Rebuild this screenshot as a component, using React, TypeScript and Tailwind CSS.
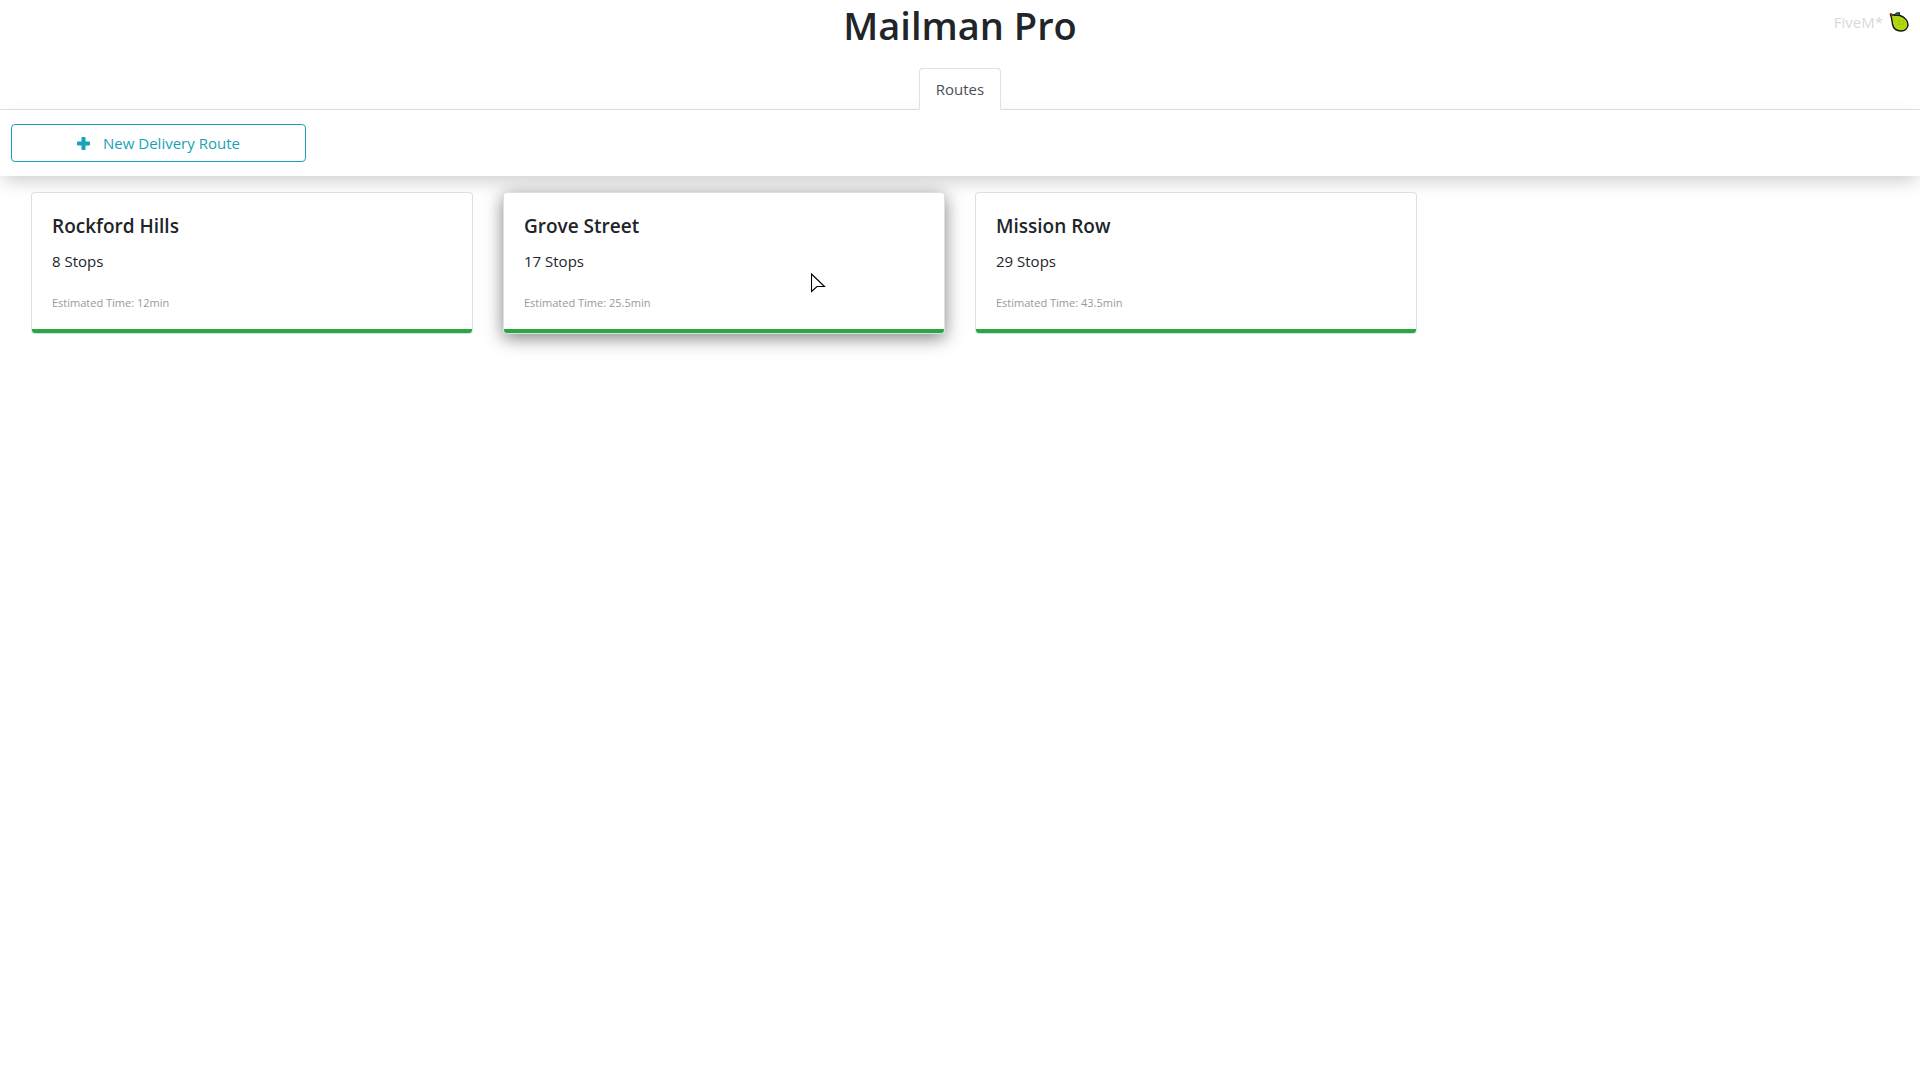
import { ReactNode } from "react";

type Route = {
  name: string;
  stops: number;
  time: string;
  active?: boolean;
};

const routes: Route[] = [
  { name: "Rockford Hills", stops: 8, time: "12min" },
  { name: "Grove Street", stops: 17, time: "25.5min", active: true },
  { name: "Mission Row", stops: 29, time: "43.5min" },
];

function PearLogo() {
  return (
    <svg width="20" height="22" viewBox="0 0 20 22" aria-hidden="true">
      <path
        d="M1.5 3.5 L11 4.5 C15 6 19 9.5 19 13.5 C19 17.5 16 20 12 20 C7.5 20 4.5 17.5 3.5 13.5 C3 10 3 7.5 1.5 3.5 Z"
        fill="#b0d60f"
        stroke="#111"
        strokeWidth="1.4"
        strokeLinejoin="round"
      />
      <path d="M5 4.5 L7 2 L10.5 1.5 L10.5 4.5 Z" fill="#0b7a3b" stroke="#111" strokeWidth="0.8" />
      <path d="M1 2.5 L4 4.5" stroke="#7a3b1d" strokeWidth="2" />
      <path d="M9 10 h2 M13 10 h2 M9 13 h2 M13 13 h2" stroke="#8fbc0a" />
    </svg>
  );
}

function PlusIcon() {
  return (
    <svg width="13" height="13" viewBox="0 0 13 13" fill="currentColor" aria-hidden="true">
      <rect x="4.5" y="0" width="4" height="13" rx="1" />
      <rect x="0" y="4.5" width="13" height="4" rx="1" />
    </svg>
  );
}

function Pointer() {
  return (
    <svg
      className="pointer-events-none absolute top-[80px] right-[118px]"
      width="15"
      height="20"
      viewBox="0 0 15 20"
      aria-hidden="true"
    >
      <path d="M0.5 1 L13.5 13.5 H6 L0.5 18.5 Z" fill="#fff" stroke="#000" strokeWidth="1.1" />
    </svg>
  );
}

function Card({ active, children }: { active?: boolean; children: ReactNode }) {
  return (
    <article
      className={
        active
          ? "relative rounded border border-black/[0.125] bg-white shadow-[0_4px_18px_0_rgba(0,0,0,0.5)]"
          : "relative rounded border border-black/[0.125] bg-white"
      }
    >
      {children}
    </article>
  );
}

export default function App() {
  return (
    <div className="min-h-screen bg-white font-['Open_Sans',sans-serif] text-[15px] leading-6 text-[#212529]">
      <header className="relative">
        <h1 className="text-center text-[38px] leading-[50px] font-semibold">Mailman Pro</h1>
        <div className="absolute top-[10px] right-[11px] flex items-center gap-[6px] text-[#d9d9d9]">
          <span>FiveM*</span>
          <PearLogo />
        </div>
      </header>

      <nav className="mt-[18px] flex justify-center border-b border-[#dee2e6]">
        <a
          href="#routes"
          className="-mb-px rounded-t border border-[#dee2e6] border-b-white bg-white px-4 py-2 text-[#495057]"
        >
          Routes
        </a>
      </nav>

      <main id="routes">
        <div className="bg-white px-[11px] py-[14px] shadow-[0_10px_16px_-4px_rgba(0,0,0,0.14),0_4px_20px_0_rgba(0,0,0,0.05)]">
          <button
            type="button"
            className="flex h-[38px] w-[295px] items-center justify-center gap-[13px] rounded border border-[#17a2b8] text-[#17a2b8]"
          >
            <PlusIcon />
            New Delivery Route
          </button>
        </div>

        <section className="grid grid-cols-4 gap-[30px] px-[31px] pt-4">
          {routes.map((route) => (
            <Card key={route.name} active={route.active}>
              <div className="px-5 pt-[21px] pb-4">
                <h2 className="mb-[11px] text-[19px] leading-6 font-semibold">{route.name}</h2>
                <p className="mb-5">{route.stops} Stops</p>
                <p className="text-[11px] leading-5 text-[#999]">Estimated Time: {route.time}</p>
              </div>
              <div className="h-1 rounded-b-[3px] bg-[#28a745]" />
              {route.active && <Pointer />}
            </Card>
          ))}
        </section>
      </main>
    </div>
  );
}
